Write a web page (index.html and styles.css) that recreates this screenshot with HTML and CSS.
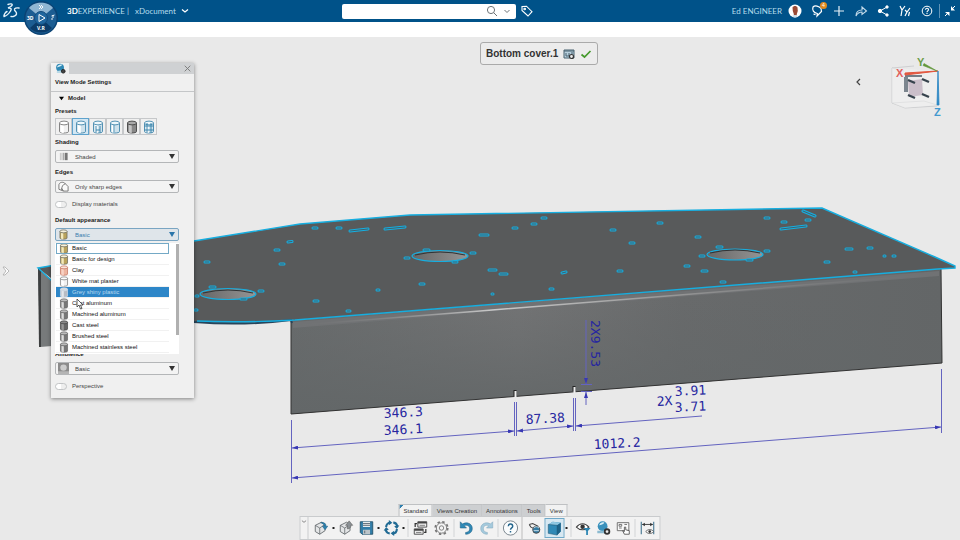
FILE: index.html
```
<!DOCTYPE html>
<html lang="en">
<head>
  <meta charset="UTF-8" />
  <title>3DEXPERIENCE | xDocument</title>
  <link rel="stylesheet" href="styles.css">
</head>
<body>

  <!-- shared icons -->
  <svg class="defs" aria-hidden="true">
    <symbol id="cyl" viewBox="0 0 12 14">
      <path d="M1.500 3v8.500c0 2 9 2 9 0V3z" fill="var(--side)" stroke="var(--line)" stroke-width=".9"/>
      <path d="M3.500 4.500v8M5 5v8" stroke="var(--shine)" stroke-width="1.500"/>
      <ellipse cx="6" cy="3" rx="4.500" ry="1.900" fill="var(--top)" stroke="var(--line)" stroke-width=".9"/>
    </symbol>
    <symbol id="box" viewBox="0 0 18 18">
      <path d="M2 6l7-3.500 4 2.500v7l-6 4-5-3z" fill="#e4e6e7" stroke="#666b6f"/>
      <path d="M2 6l5 3v7M7 9l6-4" fill="none" stroke="#666b6f" stroke-width=".9"/>
    </symbol>
  </svg>

  <header class="topbar">
    <div class="brand">
      <svg class="logo" viewBox="0 0 18 18" fill="none" stroke="#e6f3fa" stroke-width="1.400" stroke-linecap="round">
        <path d="M6 2.500c2-1 5-.8 4 .8C9.300 4.500 7.500 5.400 6 6c3-.3 4 .8 2.500 3C7 11.500 4 14 2 14.500c-.5-1 1-4 3-5"/>
        <path d="M17 6c-2.500-.5-5 .2-4.500 2 .4 1.300 2.500 2 2 4-.5 2-3.500 3-5.500 2.500"/>
      </svg>
      <button class="compass" aria-label="Compass">
        <svg viewBox="0 0 36 36">
          <circle cx="18" cy="18" r="17" fill="#0a4374"/>
          <circle cx="18" cy="18" r="15.500" fill="#1c5d92"/>
          <path d="M18 18L6 8C11 1 25 1 30 8z" fill="#8fb6d3"/>
          <path d="M18 18L7 28C12 34 24 34 29 28z" fill="#0b3c69"/>
          <circle cx="18" cy="18" r="6.500" fill="#1f669e" stroke="#124b7c"/>
          <path d="M16 14.500l6 3.500-6 3.500z" fill="none" stroke="#fff"/>
          <path d="M16 5l2 2-2 2M18 5l2 2-2 2M30 15v3M28.500 16l3-1M29 18v2" fill="none" stroke="#fff" stroke-width=".9"/>
          <text x="4" y="20">3D</text>
          <text x="14" y="30">V.R</text>
        </svg>
      </button>
      <span class="product"><b>3D</b>EXPERIENCE |</span>
      <a class="app" href="#">xDocument
        <svg viewBox="0 0 8 6"><path d="M1 1.500l3 2.500 3-2.500" fill="none" stroke="#fff" stroke-width="1.300"/></svg>
      </a>
    </div>

    <form class="search">
      <input type="text" aria-label="Search">
      <svg viewBox="0 0 12 12" fill="none" stroke="#6d7478"><circle cx="5" cy="5" r="3.600"/><path d="M7.700 7.700L11 11"/></svg>
      <svg viewBox="0 0 12 12" fill="none" stroke="#6d7478"><path d="M3.500 5L6 7.500 8.500 5"/></svg>
    </form>

    <nav class="actions">
      <button class="tag" aria-label="Tags">
        <svg viewBox="0 0 14 14" fill="none" stroke="#fff" stroke-width="1.100"><path d="M2 2.500l4.500-.3L12 7.700 8 12 2 6.500z"/><circle cx="4.700" cy="5" r=".8"/></svg>
      </button>
      <span class="user">Ed ENGINEER</span>
      <button aria-label="Profile">
        <svg viewBox="0 0 14 14"><circle cx="7" cy="7" r="6.500" fill="#fff"/><path d="M4.500 3.500c1-2 4-2 5 0l.3 3.500-1 3v1.500h-3V10l-1-3z" fill="#9b4a35"/><path d="M4 12c2-1.500 4-1.500 6 0-2 2-4 2-6 0z" fill="#cfe0ec"/></svg>
      </button>
      <button class="notify" aria-label="Notifications">
        <svg viewBox="0 0 14 14" fill="none" stroke="#fff" stroke-width="1.200"><path d="M3 3c2-2 6-1 8 1.500l.5 3L7 12l.3-2.500C3.500 9 2 6 3 3zM3.500 10l2 .7"/></svg>
        <span class="count">4</span>
      </button>
      <button aria-label="Add">
        <svg viewBox="0 0 14 14" stroke="#e6f0f7" stroke-width="1.200"><path d="M7 2v10M2 7h10"/></svg>
      </button>
      <button aria-label="Share">
        <svg viewBox="0 0 14 14" fill="none" stroke="#c4dbea" stroke-width="1.100"><path d="M2 12c0-4 2-6 6-6V3l4.500 4L8 10.500V8c-3 0-4.500 1-6 4z"/></svg>
      </button>
      <button aria-label="Collaborate">
        <svg viewBox="0 0 14 14" fill="#fff" stroke="#fff"><path d="M11 3L4 7l7 4" fill="none"/><circle cx="4" cy="7" r="1.700"/><circle cx="11" cy="3" r="1.200"/><circle cx="11" cy="11" r="1.200"/></svg>
      </button>
      <button aria-label="Communities">
        <svg viewBox="0 0 14 14" fill="none" stroke="#fff" stroke-width="1.200"><path d="M2 2l2 4 3-4M4 6l-1 6M7 6l2 2 3-4M9 8l-2 4M11.500 8l-1 4"/></svg>
      </button>
      <button aria-label="Help">
        <svg viewBox="0 0 14 14" fill="none" stroke="#fff"><circle cx="7" cy="7" r="4.800"/><path d="M5.500 5.700c.2-2 3-1.800 3 0C8.500 7 7 6.800 7 8.200M7 9v1" stroke-width="1.100"/></svg>
      </button>
      <button class="collapse" aria-label="Minimize">
        <svg viewBox="0 0 14 14" fill="#fff" stroke="#fff"><path d="M12 2L9 5M2 12l3-3"/><path d="M8 2v4.500h4zM2 8h4.500v4z" stroke="none"/></svg>
      </button>
    </nav>
  </header>

  <main class="workspace">

    <svg class="scene" viewBox="0 37 960 503" role="img" aria-label="Bottom cover sheet metal part">
      <defs>
        <linearGradient id="face" x1="0" y1="0" x2="1" y2="0">
          <stop offset="0" stop-color="#686b6c"/>
          <stop offset=".35" stop-color="#737475"/>
          <stop offset=".6" stop-color="#686a6b"/>
          <stop offset="1" stop-color="#636667"/>
        </linearGradient>
        <linearGradient id="shade" x1="0" y1="0" x2="0" y2="1">
          <stop offset=".2" stop-color="#636768" stop-opacity="0"/>
          <stop offset="1" stop-color="#636768"/>
        </linearGradient>
        <linearGradient id="bend" x1="0" y1="0" x2="1" y2="0">
          <stop offset="0" stop-color="#777" stop-opacity="0"/>
          <stop offset=".3" stop-color="#c9c9c9"/>
          <stop offset=".5" stop-color="#a5a5a5"/>
          <stop offset="1" stop-color="#777" stop-opacity="0"/>
        </linearGradient>
        <linearGradient id="hole" x1="0" y1="0" x2="1" y2="0">
          <stop offset="0" stop-color="#666"/>
          <stop offset="1" stop-color="#959595"/>
        </linearGradient>
        <marker id="arrow" viewBox="0 0 6 4" refX="6" refY="2" markerWidth="6" markerHeight="4" orient="auto-start-reverse">
          <path d="M0 0l6 2-6 2z" fill="#3838b4"/>
        </marker>
        <path id="cuts" d="M313 228h4M337 228h4M350 231l18-2M385 229l20-2M480 235h8M288 242l4-.5M275 250h4M205 262h4M280 264h4M377 290h2M420 284h4M314 301h4M347 311h3
          M424 250h5M471 253h4M405 258h4M453 262h4M210 287h5M259 291h4M241 299h5M196 296h2M195 310h2
          M542 218h4M532 224h4M513 228h4M611 230h4M658 223h4M630 243h4M696 237h4M765 218h4M489 270h7M500 274h7M492 294h1M562 273l4-1M550 289h3M618 271h4M685 266h4M702 271h5M721 282h4
          M717 247h5M765 251h4M700 256h4M747 260h5M782 222h4M806 220h4M803 211l12 5M781 229l25-3M846 249h6M868 248h4M884 256h1M893 256h2M825 262h4M854 272h2"/>
      </defs>

      <path d="M38 268l14 13v65l-12 1z" fill="#777a7b"/>
      <path d="M38 268l3 3v76h-2z" fill="#3c3e3f"/>

      <!-- front flange -->
      <path d="M291 320l650-52 1 95-651 51z" fill="url(#face)"/>
      <path d="M291 320l650-52 1 95-651 51z" fill="url(#shade)" stroke="#333"/>
      <path d="M293 322l646-51v5L293 328z" fill="#707274"/>
      <path d="M300 325l180-14 460-37" fill="none" stroke="url(#bend)" stroke-width="1.500"/>

      <!-- top plate -->
      <path d="M38 268l156-27 106-17 110-9 412-7 113 49 20 9v2l-15 1-649 51q-50 5-97 2L60 285z" fill="#585a5b"/>
      <path d="M194 322q50 4 97-2l1 3" fill="none" stroke="#27445a" stroke-width="2"/>
      <path d="M52 281L38 268l156-27 106-17 110-9 412-7 113 49 20 9v2l-17 1-643 51q-53 3-98 1" fill="none" stroke="#16aee0" stroke-width="1.400"/>

      <g fill="url(#hole)" stroke="#16aee0" stroke-width="1.200">
        <ellipse cx="228" cy="294" rx="28" ry="5.500"/>
        <ellipse cx="440" cy="256" rx="28" ry="5.500"/>
        <ellipse cx="735" cy="254.500" rx="28" ry="5.500"/>
      </g>
      <path d="M203 293q25-6 50 0M415 255q25-6 50 0M710 253q25-6 50 0" fill="none" stroke="#303436" stroke-width="1.200"/>

      <!-- cutouts -->
      <use href="#cuts" class="cuts"/>
      <use href="#cuts" class="cuts-inner"/>

      <path d="M515 390v6M574 386v5" stroke="#222" stroke-width="3"/>
      <path d="M515.500 391v6M574.500 387v6" stroke="#eee" stroke-width="2"/>

      <!-- dimensions -->
      <g class="dims">
        <path d="M291.500 420v63M941.500 369v64M514.500 402v34M516.500 402v34M573.500 398v33M575.500 398v33M581 384.500h11M581 391.500h11"/>
        <path d="M292 448l222-17" marker-start="url(#arrow)" marker-end="url(#arrow)"/>
        <path d="M517 431l56-5" marker-start="url(#arrow)" marker-end="url(#arrow)"/>
        <path d="M292 478l649-51" marker-start="url(#arrow)" marker-end="url(#arrow)"/>
        <path d="M576 426l126-10" marker-start="url(#arrow)"/>
        <path d="M586 320v64" marker-end="url(#arrow)"/>
        <path d="M586 405v-13" marker-end="url(#arrow)"/>
      </g>
      <g class="dim-text">
        <text transform="translate(384 418) rotate(-3)">346.3</text>
        <text transform="translate(384 435) rotate(-3)">346.1</text>
        <text transform="translate(526 424) rotate(-3)">87.38</text>
        <text transform="translate(657 406) rotate(-3)">2X</text>
        <text transform="translate(675 396) rotate(-3)">3.91</text>
        <text transform="translate(675 412) rotate(-3)">3.71</text>
        <text transform="translate(594 449) rotate(-3)">1012.2</text>
        <text transform="translate(591 320) rotate(90)">2X9.53</text>
      </g>
    </svg>

    <button class="edge-handle" aria-label="Open tree">
      <svg viewBox="0 0 8 10"><path d="M1 1h2l4 4-4 4H1l3-4z" fill="#fff" stroke="#aaa" stroke-width=".8"/></svg>
    </button>

    <div class="part-label">
      <span>Bottom cover.1</span>
      <svg viewBox="0 0 12 12"><path d="M1 2h10v8H1z" fill="#b7cfdd" stroke="#47606f"/><path d="M1 3h10M3 5v3h3V5M8 5h2" stroke="#47606f" fill="none"/><circle cx="8.500" cy="8.500" r="2" fill="#eee" stroke="#333" stroke-width="1.200"/></svg>
      <svg viewBox="0 0 12 12"><path d="M1.500 6.500L4.500 9 10.500 3" fill="none" stroke="#459a2c" stroke-width="1.700"/></svg>
    </div>

    <button class="side-open" aria-label="Open side panel">
      <svg viewBox="0 0 6 8"><path d="M5 1L2 4l3 3" fill="none" stroke="#444" stroke-width="1.200"/></svg>
    </button>

    <svg class="robot" viewBox="0 0 52 60" role="img" aria-label="View orientation">
      <path d="M2 11v35l13 5 32-2M2 46l32-2 13 4M2 11l12 3M2 11l22-2" fill="none" stroke="#c6c8ca" stroke-width=".8"/>
      <path d="M2 11l46 3-1 34-32 3-13-5z" fill="#f3f3f3" opacity=".5"/>
      <path d="M18 24l14-2 1 16-14 2z" fill="#cbbfca"/>
      <path d="M15 20v15M17 20v15M15 19h17" stroke="#4c5a66" stroke-width="1.400"/>
      <path d="M18 23l7 3M32 22l7 3M18 38l7 3M32 37l7 3" stroke="#37434d" stroke-width="2.400"/>
      <path d="M15 18l33-4-33 2z" fill="#e2573f" stroke="#e2573f"/>
      <path d="M33 8.500l14 5.500-13-7.500z" fill="#62973a" stroke="#62973a" stroke-width=".6"/>
      <path d="M48 14l1 34h-2z" fill="#2b87c4" stroke="#2b87c4" stroke-width=".8"/>
      <text x="6" y="20" fill="#e2605c">X</text>
      <text x="27" y="9" fill="#6d9c48">Y</text>
      <text x="44" y="59" fill="#4399cf">Z</text>
    </svg>

    <section class="panel">
      <div class="panel-head">
        <span class="panel-tab">
          <svg viewBox="0 0 12 12"><circle cx="5.500" cy="5" r="4.300" fill="#2f88b4"/><path d="M2 5c1-3 4-4 6-3-1 2-4 2-6 3z" fill="#d7eef7"/><path d="M2 9c2-1 5-1 7 0v2H2z" fill="#b9d9e6"/><circle cx="9" cy="9" r="2" fill="#444" stroke="#222"/></svg>
        </span>
        <button class="close" aria-label="Close"><svg viewBox="0 0 8 8"><path d="M1.500 1.500l5 5M6.500 1.500l-5 5" stroke="#777" stroke-width=".8" fill="none"/></svg></button>
      </div>
      <h1>View Mode Settings</h1>
      <div class="panel-body">
        <h2><svg viewBox="0 0 6 6"><path d="M0 1h6L3 5z"/></svg>Model</h2>

        <h3>Presets</h3>
        <div class="presets">
          <button class="white" aria-label="Shading"><svg><use href="#cyl"/></svg></button>
          <button class="blue on" aria-label="Shading with edges"><svg><use href="#cyl"/></svg></button>
          <button class="blue" aria-label="Hidden edges"><svg><use href="#cyl"/></svg><svg class="wire" viewBox="0 0 12 14"><path d="M4 6v7M8 6v7M4 10h4"/></svg></button>
          <button class="blue" aria-label="Sharp edges"><svg><use href="#cyl"/></svg><svg class="wire" viewBox="0 0 12 14"><path d="M5 5v8"/></svg></button>
          <button class="steel" aria-label="Material"><svg><use href="#cyl"/></svg></button>
          <button class="blue" aria-label="Wireframe"><svg><use href="#cyl"/></svg><svg class="wire" viewBox="0 0 12 14"><path d="M4 3v10M8 3v10M1.500 6h9M1.500 10h9"/></svg></button>
        </div>

        <div class="field">
          <label for="shading">Shading</label>
          <div class="pick">
            <svg class="pick-icon" viewBox="0 0 12 12"><path d="M3 2v8" stroke="#ccc" stroke-width="2"/><path d="M6 2v8" stroke="#aaa" stroke-width="2"/><path d="M9 2v8" stroke="#777" stroke-width="3"/></svg>
            <select id="shading"><option>Shaded</option></select>
          </div>
        </div>

        <div class="field">
          <label for="edges">Edges</label>
          <div class="pick">
            <svg class="pick-icon" viewBox="0 0 12 12" fill="#fafafa" stroke="#666" stroke-width=".9"><path d="M1 4c1-3 4-3 6-2l4 4v5H6L1 9z"/><path d="M4 10c0-4 1-6 4-7M6 11L4 8" fill="none"/></svg>
            <select id="edges"><option>Only sharp edges</option></select>
          </div>
        </div>

        <label class="switch"><input type="checkbox">Display materials</label>

        <div class="field open">
          <label for="appearance">Default appearance</label>
          <div class="pick">
            <svg class="pick-icon gold"><use href="#cyl"/></svg>
            <select id="appearance"><option>Basic</option></select>
          </div>
          <ul class="menu" role="listbox" aria-label="Default appearance">
            <li class="current gold" role="option"><svg><use href="#cyl"/></svg>Basic</li>
            <li class="gold" role="option"><svg><use href="#cyl"/></svg>Basic for design</li>
            <li class="clay" role="option"><svg><use href="#cyl"/></svg>Clay</li>
            <li class="white" role="option"><svg><use href="#cyl"/></svg>White mat plaster</li>
            <li class="hover plastic" role="option" aria-selected="true"><svg><use href="#cyl"/></svg>Grey shiny plastic</li>
            <li class="metal" role="option"><svg><use href="#cyl"/></svg>Cast aluminum</li>
            <li class="metal" role="option"><svg><use href="#cyl"/></svg>Machined aluminum</li>
            <li class="dark" role="option"><svg><use href="#cyl"/></svg>Cast steel</li>
            <li class="metal" role="option"><svg><use href="#cyl"/></svg>Brushed steel</li>
            <li class="metal" role="option"><svg><use href="#cyl"/></svg>Machined stainless steel</li>
          </ul>
          <svg class="pointer" viewBox="0 0 8 12"><path d="M1 1v8l2-2 1.500 4L6 10.500 4.500 7H7z" fill="#fff" stroke="#333" stroke-width=".8"/></svg>
        </div>

        <div class="field">
          <label for="ambience">Ambience</label>
          <div class="pick">
            <svg class="pick-icon" viewBox="0 0 12 12"><path d="M0 0h12v12H0z" fill="#8b8b8b"/><path d="M0 9h12v3H0z" fill="#b5b5b5"/><circle cx="6" cy="5" r="3.500" fill="#ccc"/></svg>
            <select id="ambience"><option>Basic</option></select>
          </div>
        </div>

        <label class="switch"><input type="checkbox">Perspective</label>
      </div>
    </section>

    <div class="dock">
      <div class="tabs" role="tablist">
        <button class="marked" role="tab">Standard</button>
        <button role="tab">Views Creation</button>
        <button role="tab">Annotations</button>
        <button role="tab">Tools</button>
        <button class="active" role="tab">View</button>
      </div>
      <div class="toolbar">
        <button class="grip" aria-label="Collapse"><svg viewBox="0 0 8 6"><path d="M1.500 2L4 4l2.500-2" fill="none" stroke="#777"/></svg></button>
        <button aria-label="Import"><svg viewBox="0 0 18 18"><use href="#box"/><path d="M8 3c4-1 6 1 6 4h2l-3 4-3-4h2c0-2-1-3-4-4z" fill="#2b83b0" stroke="#185a80" stroke-width=".6"/></svg></button>
        <i class="more"></i>
        <button aria-label="Export"><svg viewBox="0 0 18 18"><use href="#box"/><path d="M10 10V6H8l4-5 4 5h-2c0 2-1 4-4 4z" fill="#8b9195" stroke="#555" stroke-width=".6"/></svg></button>
        <button aria-label="Save"><svg viewBox="0 0 18 18"><path d="M2 2h14v14H4l-2-2z" fill="#317da8" stroke="#235169"/><path d="M5 2h8v6H5z" fill="#e8edef"/><path d="M5 11h8v5H5z" fill="#bcc5ca"/><path d="M7 12v3M5 4h8M5 6h8" stroke="#53626b"/></svg></button>
        <i class="more"></i>
        <button aria-label="Update"><svg viewBox="0 0 18 18" fill="none" stroke="#216b94" stroke-width="2.400"><path d="M3 8c0-3 2-5 5-5M11 3c3 0 4 2 4.500 4M15 10c0 3-2 5-5 5M7 15c-3 0-4-2-4.500-4"/><path d="M6 0l4 3-4 3zM18 6l-3 4-3-3zM12 18l-4-3 4-3zM0 12l3-4 3 3z" fill="#216b94" stroke="none"/></svg></button>
        <i class="more"></i>
        <i class="rule"></i>
        <button aria-label="Replace"><svg viewBox="0 0 18 18"><path d="M6 2h10v6H6zM2 10h10v6H2z" fill="#eee" stroke="#444"/><path d="M6 3h10M2 11h10" stroke="#444" stroke-width="2"/><path d="M8 6h6M4 14h6" stroke="#777"/><path d="M3 8V4h2M15 10v4h-2" fill="none" stroke="#333" stroke-width="1.400"/></svg></button>
        <button class="options" aria-label="Options"><svg viewBox="0 0 18 18" fill="none" stroke="#777"><circle cx="9" cy="9" r="7" stroke-width="2" stroke-dasharray="2.750 2.750"/><circle cx="9" cy="9" r="5.800" fill="#f4f4f4"/><circle cx="9" cy="9" r="2.500"/></svg></button>
        <i class="rule"></i>
        <button aria-label="Undo"><svg viewBox="0 0 18 18"><path d="M2 2v7h7L6.500 6.500C10 5 13 7 12.500 10.500 12 13 10 14 8 14v2c5 0 7.500-3 7.500-6.500C15.500 4 9 1.500 4.500 4.500z" fill="#3089b6" stroke="#1d5f85" stroke-width=".6"/></svg></button>
        <button aria-label="Redo"><svg viewBox="0 0 18 18"><path d="M16 2v7H9l2.500-2.500C8 5 5 7 5.500 10.500 6 13 8 14 10 14v2c-5 0-7.500-3-7.500-6.500C2.500 4 9 1.500 13.500 4.500z" fill="#a5cadd" stroke="#82a9bd" stroke-width=".6"/></svg></button>
        <i class="rule"></i>
        <button aria-label="Help"><svg viewBox="0 0 18 18" fill="none"><circle cx="9" cy="9" r="8" fill="#fafcfd" stroke="#6d7a83"/><path d="M6.500 7c.2-3.500 5-3 5 0C11.500 9 9 8.800 9 11M9 12.300v1.700" stroke="#24668d" stroke-width="1.600"/></svg></button>
        <i class="rule strong"></i>
        <button aria-label="Fly"><svg viewBox="0 0 18 18"><path d="M3 5l4-1 6 3M3 5l2 3 4 2" fill="#eee" stroke="#444" stroke-width="1.200"/><circle cx="11" cy="11" r="4" fill="#347ca3" stroke="#444"/><path d="M8 9c2-2 4-2 6 0M8 12h6" fill="none" stroke="#d6e8f0"/></svg></button>
        <button class="pressed" aria-label="View modes"><svg viewBox="0 0 18 18"><path d="M2 5l5-3 9 1v10l-4 4-10-2z" fill="#3089b6"/><path d="M2 5l5-3 9 1-4 3z" fill="#8fc7e2"/><path d="M12 6l4-3v10l-4 4z" fill="#1d6288"/><path d="M2 5l10 1v11L2 15z" fill="none" stroke="#1d526e" stroke-width=".6"/></svg></button>
        <i class="more"></i>
        <i class="rule"></i>
        <button aria-label="Visibility"><svg viewBox="0 0 18 18"><path d="M1 8c4-5 10-5 14 0-4 4-10 4-14 0z" fill="#fff" stroke="#444" stroke-width="1.300"/><circle cx="8" cy="7.500" r="2.500" fill="#333"/><path d="M9 9h8l-3 3.500V17h-2v-4.500z" fill="#2d86b3"/></svg></button>
        <button aria-label="Ambience settings"><svg viewBox="0 0 18 18"><circle cx="8" cy="7" r="5.500" fill="#3a91bc"/><path d="M4 6c1-3 4-4 6-3-1 2-4 2-6 3z" fill="#d7eef7"/><path d="M2 12h11v3H2z" fill="#8cbad0"/><circle cx="13" cy="13" r="2.600" fill="#eee" stroke="#333" stroke-width="2"/></svg></button>
        <button aria-label="Touch"><svg viewBox="0 0 18 18"><path d="M2 3h13v9H2z" fill="#fafafa" stroke="#666"/><path d="M4 5h3v2H4zM10 5h3M4 9h3" fill="none" stroke="#666"/><path d="M10 16l-2-4 2 1V8h1.500v3l4 1v4z" fill="#fff" stroke="#555"/></svg></button>
        <i class="rule"></i>
        <button aria-label="Show dimensions"><svg viewBox="0 0 18 18"><path d="M2 2v14M16 2v14" stroke="#4b7b95" stroke-width="1.300"/><path d="M3 5h12" stroke="#333"/><path d="M3 5l3-2v4zM15 5l-3-2v4z" fill="#333"/><path d="M7 13c3-3 6-3 9 0-3 3-6 3-9 0z" fill="#fff" stroke="#555"/><circle cx="11.500" cy="13" r="1.500" fill="#333"/></svg></button>
      </div>
    </div>
  </main>

</body>
</html>
```
FILE: styles.css
```
* {
  box-sizing: border-box;
}

body {
  margin: 0;
  height: 100vh;
  display: flex;
  flex-direction: column;
  overflow: hidden;
  background: #fff;
  color: #3c3c3c;
  font-family: "Liberation Sans", Arial, sans-serif;
  font-size: 6px;
}

button {
  padding: 0;
  border: 0;
  background: none;
  font: inherit;
  color: inherit;
}

svg {
  display: block;
}

.defs {
  position: absolute;
  width: 0;
  height: 0;
}

/* top bar */
.topbar {
  display: grid;
  grid-template-columns: 35.6% 18.2% 1fr;
  align-items: center;
  height: 22px;
  margin-bottom: 15px;
  background: #005289;
  color: #b5dcec;
  font-family: Lato, sans-serif;
  font-size: 8px;
}

.brand {
  display: flex;
  align-items: center;
  height: 22px;
}

.logo {
  width: 18px;
  height: 18px;
  margin-left: 2px;
}

.compass {
  position: relative;
  z-index: 2;
  align-self: flex-start;
  width: 36px;
  height: 36px;
  margin: 0 8px 0 3px;
}

.compass text {
  font: bold 5px "Noto Sans", sans-serif;
  fill: #fff;
}

.product b {
  color: #fff;
}

.app {
  display: flex;
  align-items: center;
  gap: 5px;
  margin-left: 6px;
  color: inherit;
  text-decoration: none;
}

.app svg {
  width: 8px;
  height: 6px;
}

.search {
  display: flex;
  align-items: center;
  gap: 3px;
  height: 15px;
  padding-right: 3px;
  background: #fff;
  border-radius: 2px;
}

.search input {
  flex: 1;
  min-width: 0;
  border: 0;
  background: none;
}

.search svg {
  width: 12px;
  height: 12px;
}

.actions {
  display: flex;
  align-items: center;
  gap: 8px;
  padding: 0 3px 0 4px;
}

.actions button {
  position: relative;
  width: 14px;
  height: 14px;
}

.user {
  margin-left: auto;
  margin-right: -2px;
}

.count {
  position: absolute;
  top: -2px;
  right: -3px;
  width: 7px;
  height: 7px;
  border-radius: 50%;
  background: #e08a1e;
  color: #fff;
  font-size: 5px;
  line-height: 7px;
  text-align: center;
}

.actions .collapse {
  width: 18px;
  margin-left: -3px;
  padding-left: 3px;
  border-left: 1px solid #5f93b7;
}

/* 3D view */
.workspace {
  position: relative;
  flex: 1;
  background: #e9e9e9;
}

.scene {
  position: absolute;
  width: 100%;
  height: 100%;
}

.cuts,
.cuts-inner {
  fill: none;
  stroke: #16aee0;
  stroke-width: 3;
  stroke-linecap: round;
}

.cuts-inner {
  stroke: #41606c;
  stroke-width: 1;
}

.dims {
  fill: none;
  stroke: #6464c0;
  stroke-width: 1;
}

.dim-text {
  font-family: "DejaVu Sans Mono", monospace;
  font-size: 13px;
  fill: #2626a0;
}

.edge-handle {
  position: absolute;
  left: 2px;
  top: 229px;
  width: 8px;
  height: 10px;
}

.part-label {
  position: absolute;
  top: 5px;
  left: 50%;
  display: flex;
  align-items: center;
  gap: 5px;
  height: 23px;
  padding: 0 5px;
  border: 1px solid #aaa;
  border-radius: 3px;
  background: #ececec;
  font-size: 10px;
  font-weight: bold;
  color: #333;
}

.part-label svg {
  width: 12px;
  height: 12px;
}

.side-open {
  position: absolute;
  right: 99px;
  top: 41px;
}

.side-open svg {
  width: 6px;
  height: 8px;
}

.robot {
  position: absolute;
  right: 18px;
  top: 20px;
  width: 52px;
  height: 60px;
}

.robot text {
  font-size: 11px;
  font-weight: bold;
}

/* settings panel */
.panel {
  position: absolute;
  left: 51px;
  top: 26px;
  width: 143px;
  background: #f0f0f0;
  box-shadow: 0 1px 4px rgba(0, 0, 0, 0.45);
}

.panel-head {
  display: flex;
  justify-content: space-between;
  height: 11px;
  background: #cfd1d3;
}

.panel-tab {
  width: 18px;
  padding-left: 4px;
  background: #f0f0f0;
}

.panel-tab svg {
  width: 11px;
  height: 11px;
}

.close {
  width: 12px;
  padding-left: 1px;
}

.close svg {
  width: 9px;
  height: 9px;
}

h1,
h2,
h3,
.field label {
  margin: 0;
  font-size: 6px;
  font-weight: bold;
  line-height: 10px;
  color: #222;
}

h1 {
  height: 18px;
  padding: 3px 4px;
  border-bottom: 1px solid #c4c6c8;
}

.panel-body {
  padding: 1px 15px 1px 4px;
}

h2 {
  display: flex;
  align-items: center;
  gap: 4px;
  margin-bottom: 3px;
  padding-left: 4px;
}

h2 svg {
  width: 5px;
  height: 5px;
}

.presets {
  display: flex;
  margin: 2px 0;
}

.presets button {
  position: relative;
  display: grid;
  place-items: center;
  width: 17px;
  height: 17px;
  border: 1px solid #c6c8ca;
}

.presets button.on {
  border-color: #5fa3cd;
  background: #d3e7f3;
}

.presets svg {
  width: 12px;
  height: 14px;
}

.presets .wire {
  position: absolute;
  fill: none;
  stroke: #3d86ad;
}

.field {
  position: relative;
  margin-bottom: 4px;
}

.field label {
  display: block;
  margin-bottom: 3px;
}

.pick {
  position: relative;
}

.pick-icon {
  position: absolute;
  left: 3px;
  top: 1px;
  width: 11px;
  height: 11px;
}

.pick::after {
  content: "";
  position: absolute;
  right: 4px;
  top: 4px;
  border: 3px solid transparent;
  border-top: 5px solid #333;
  border-bottom: 0;
}

select {
  display: block;
  appearance: none;
  width: 100%;
  height: 13px;
  padding: 0 19px;
  border: 1px solid #b4b6b8;
  border-radius: 2px;
  background: #f3f3f3;
  font: inherit;
  color: #444;
}

.switch {
  display: flex;
  align-items: center;
  gap: 5px;
  height: 12px;
  margin: 5px 0;
  color: #444;
}

.switch input {
  appearance: none;
  width: 12px;
  height: 7px;
  margin: 0;
  border: 1px solid #c2c4c6;
  border-radius: 4px;
  background: linear-gradient(90deg, #fff 50%, #eee 50%);
}

.open {
  min-height: 130px;
}

.open select {
  border-color: #7aa5c2;
  background: #dfe5ea;
  color: #3b7cae;
}

.open .pick::after {
  border-top-color: #2a75aa;
}

/* option list */
.menu {
  position: absolute;
  top: 28px;
  left: 0;
  z-index: 1;
  width: 100%;
  height: 111px;
  margin: 0;
  padding: 0 10px 0 1px;
  overflow: hidden;
  list-style: none;
  background: #fff;
  color: #111;
}

.menu::after {
  content: "";
  position: absolute;
  right: 0;
  top: 1px;
  width: 3px;
  height: 91px;
  background: #b0b0b0;
}

.menu li {
  display: flex;
  align-items: center;
  gap: 3px;
  height: 11px;
  padding-left: 3px;
  border-bottom: 1px solid #f1f1f1;
}

.menu svg {
  width: 10px;
  height: 11px;
}

.menu .current {
  outline: 1px solid #74a9c6;
  outline-offset: -1px;
}

.menu .hover {
  background: #2d86c8;
  color: #b9daf0;
}

.pointer {
  position: absolute;
  left: 21px;
  top: 83px;
  z-index: 2;
  width: 8px;
  height: 12px;
}

/* cylinder finishes */
.gold { --side: #b9a35c; --shine: #f3e9bd; --top: #f6f1da; --line: #66665c; }
.clay { --side: #eeb5a0; --shine: #f8d3c5; --top: #fbe3da; --line: #c0705a; }
.white { --side: #f1f1f1; --shine: #fff; --top: #fff; --line: #777; }
.blue { --side: #cfe2ec; --shine: #fff; --top: #eef7fb; --line: #4387ab; }
.steel { --side: #888; --shine: #c4c4c4; --top: #aaa; --line: #444; }
.plastic { --side: #b7bcc4; --shine: #e2e6ec; --top: #d5dae0; --line: #d0dce8; }
.metal { --side: #777; --shine: #ddd; --top: #bbb; --line: #666; }
.dark { --side: #666; --shine: #999; --top: #888; --line: #444; }

/* action bar */
.dock {
  position: absolute;
  bottom: 0;
  left: 50%;
  transform: translateX(-50%);
}

.tabs {
  display: flex;
  align-items: flex-end;
  margin-left: 99px;
}

.tabs button {
  height: 12px;
  padding: 0 4px;
  border: 1px solid #bfc1c3;
  border-width: 1px 1px 0 0;
  background: #cdcfd1;
  color: #333;
}

.tabs .active,
.tabs .marked {
  background: #f2f2f2;
}

.tabs .marked {
  border-left-width: 1px;
  background: linear-gradient(135deg, #2f7fae 3px, #f2f2f2 3px);
}

.toolbar {
  display: flex;
  align-items: center;
  gap: 2px;
  height: 24px;
  padding-right: 3px;
  border: 1px solid #c9cbcd;
  background: #f2f2f2;
}

.toolbar button {
  width: 18px;
  height: 18px;
}

.toolbar button > svg {
  width: 18px;
  height: 18px;
  padding: 1px;
}

.toolbar .grip {
  width: 8px;
  height: 22px;
  margin-right: 2px;
  border-right: 1px solid #c9cbcd;
}

.toolbar .grip svg {
  width: 7px;
  height: 5px;
  padding: 0;
  margin-bottom: 14px;
}

.toolbar .options {
  margin: 0 1px;
}

.toolbar .pressed {
  outline: 1px solid #6fa9c9;
  background: #d7e8f2;
}

.more {
  width: 3px;
  height: 2px;
  border-left: 2px solid #222;
}

.rule {
  width: 1px;
  height: 18px;
  margin-right: 1px;
  background: #d2d4d6;
}

.rule.strong {
  height: 22px;
  background: #bbb;
}
```
